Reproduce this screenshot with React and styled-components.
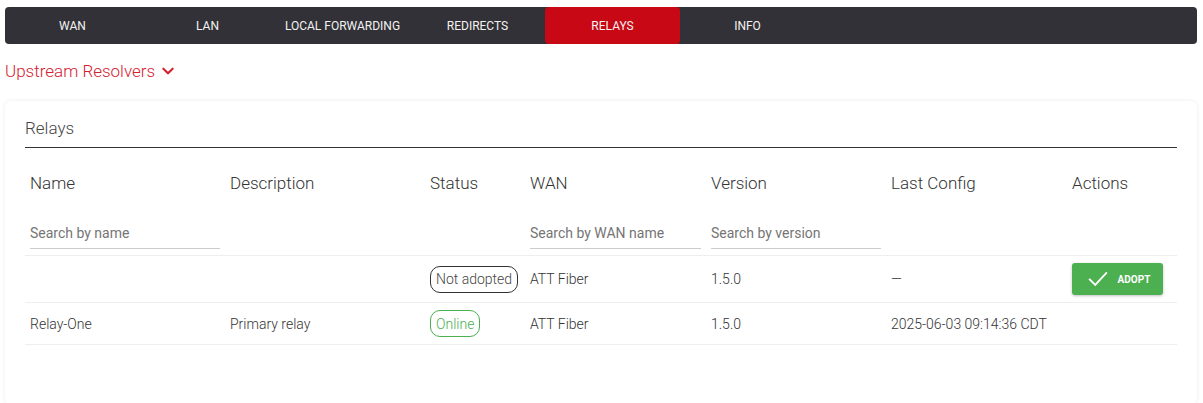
import styled, { createGlobalStyle } from 'styled-components';

const GlobalStyle = createGlobalStyle`
  body {
    margin: 0;
    background: #fff;
    font-family: Roboto, 'Liberation Sans', sans-serif;
    color: #333;
  }
`;

const Page = styled.div`
  padding: 7px 6px 0 5px;
`;

const TabBar = styled.nav`
  display: flex;
  height: 37px;
  background: #323137;
  border-radius: 4px;
`;

const Tab = styled.div`
  width: 135px;
  display: flex;
  align-items: center;
  justify-content: center;
  font-size: 12px;
  color: #f2f2f2;
  text-transform: uppercase;
  border-radius: 4px;
  background: ${p => (p.$active ? '#c80815' : 'transparent')};
`;

const SectionToggle = styled.div`
  display: flex;
  align-items: center;
  gap: 6px;
  margin-top: 17px;
  height: 20px;
  font-size: 17px;
  color: #d3202f;
  font-weight: 300;
`;

const Card = styled.section`
  margin-top: 20px;
  padding: 17px 20px 60px;
  background: #fff;
  border-radius: 6px;
  box-shadow: 0 0 4px rgba(0, 0, 0, 0.08);
`;

const CardTitle = styled.h2`
  margin: 0;
  padding-bottom: 9px;
  font-size: 17px;
  line-height: 20px;
  font-weight: 300;
  color: #444;
  border-bottom: 1px solid #333;
`;

const Table = styled.table`
  width: 100%;
  border-collapse: collapse;
  table-layout: fixed;
`;

const Th = styled.th`
  text-align: left;
  font-weight: 300;
  font-size: 17px;
  line-height: 20px;
  color: #333;
  padding: 25px 5px 15px;
`;

const FilterCell = styled.td`
  padding: 13px 5px 6px;
  border-bottom: 1px solid #eee;
`;

const SearchInput = styled.input`
  width: 100%;
  box-sizing: border-box;
  height: 28px;
  border: none;
  border-bottom: 1px solid #ccc;
  padding: 0 0 4px;
  font-family: inherit;
  font-size: 14px;
  color: #333;
  outline: none;
  background: transparent;
  &::placeholder {
    color: #757575;
  }
`;

const Td = styled.td`
  padding: 7px 5px;
  height: ${p => (p.$tall ? '32px' : '27px')};
  font-size: 14px;
  font-weight: 300;
  color: #333;
  border-bottom: 1px solid #eee;
  white-space: nowrap;
`;

const Badge = styled.span`
  display: inline-flex;
  align-items: center;
  height: 25px;
  padding: 0 5px;
  border-radius: 10px;
  border: 1px solid ${p => (p.$tone === 'green' ? '#4caf50' : '#333')};
  color: ${p => (p.$tone === 'green' ? '#4caf50' : '#444')};
  font-size: 14px;
`;

const AdoptButton = styled.button`
  display: flex;
  align-items: center;
  justify-content: center;
  gap: 9px;
  width: 91px;
  height: 32px;
  border: none;
  border-radius: 3px;
  background: #4caf50;
  color: #fff;
  font-family: inherit;
  font-size: 10px;
  font-weight: 700;
  box-shadow: 0 1px 3px rgba(0, 0, 0, 0.25);
  padding: 0 0 0 2px;
`;

const tabs = ['WAN', 'LAN', 'Local Forwarding', 'Redirects', 'Relays', 'Info'];

const columns = [
  { label: 'Name', width: 200, search: 'Search by name', searchWidth: 190 },
  { label: 'Description', width: 200 },
  { label: 'Status', width: 100 },
  { label: 'WAN', width: 181, search: 'Search by WAN name', searchWidth: 171 },
  { label: 'Version', width: 180, search: 'Search by version', searchWidth: 170 },
  { label: 'Last Config', width: 181 },
  { label: 'Actions' },
];

const ChevronDown = () => (
  <svg width="14" height="14" viewBox="0 0 24 24" fill="none" stroke="#d3202f" strokeWidth="3.6" strokeLinecap="round" strokeLinejoin="round">
    <path d="M4 8l8 8 8-8" />
  </svg>
);

const Check = () => (
  <svg width="22" height="22" viewBox="0 0 24 24" fill="none" stroke="#fff" strokeWidth="2" strokeLinecap="square">
    <path d="M3 12.5l6 6L21 5.5" />
  </svg>
);

export default function App() {
  return (
    <Page>
      <GlobalStyle />
      <TabBar>
        {tabs.map(t => (
          <Tab key={t} $active={t === 'Relays'}>{t}</Tab>
        ))}
      </TabBar>
      <SectionToggle>
        Upstream Resolvers <ChevronDown />
      </SectionToggle>
      <Card>
        <CardTitle>Relays</CardTitle>
        <Table>
          <colgroup>
            {columns.map(c => (
              <col key={c.label} style={c.width ? { width: c.width } : undefined} />
            ))}
          </colgroup>
          <thead>
            <tr>
              {columns.map(c => (
                <Th key={c.label}>{c.label}</Th>
              ))}
            </tr>
            <tr>
              {columns.map(c => (
                <FilterCell key={c.label}>
                  {c.search && <SearchInput placeholder={c.search} style={{ width: c.searchWidth }} />}
                </FilterCell>
              ))}
            </tr>
          </thead>
          <tbody>
            <tr>
              <Td $tall></Td>
              <Td $tall></Td>
              <Td $tall><Badge>Not adopted</Badge></Td>
              <Td $tall>ATT Fiber</Td>
              <Td $tall>1.5.0</Td>
              <Td $tall>—</Td>
              <Td $tall>
                <AdoptButton><Check />ADOPT</AdoptButton>
              </Td>
            </tr>
            <tr>
              <Td>Relay-One</Td>
              <Td>Primary relay</Td>
              <Td><Badge $tone="green">Online</Badge></Td>
              <Td>ATT Fiber</Td>
              <Td>1.5.0</Td>
              <Td>2025-06-03 09:14:36 CDT</Td>
              <Td></Td>
            </tr>
          </tbody>
        </Table>
      </Card>
    </Page>
  );
}
